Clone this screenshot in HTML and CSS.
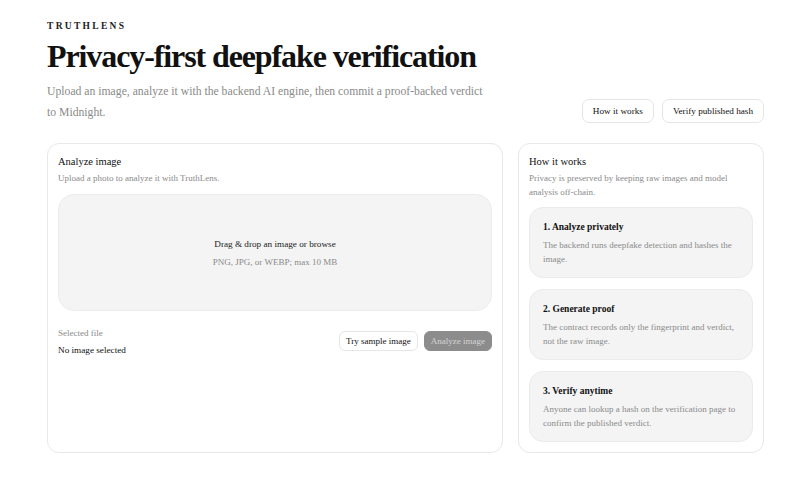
FILE: index.html
```html
<!DOCTYPE html>
<html lang="en">
<head>
<meta charset="utf-8">
<title>TruthLens</title>
<link rel="stylesheet" href="styles.css">
</head>
<body>
<div class="page">
  <header class="hero">
    <div class="hero-text">
      <div class="brand">TRUTHLENS</div>
      <h1 class="title">Privacy-first deepfake verification</h1>
      <p class="lead">Upload an image, analyze it with the backend AI engine, then commit a proof-backed verdict to Midnight.</p>
    </div>
    <div class="hero-actions">
      <button class="btn">How it works</button>
      <button class="btn">Verify published hash</button>
    </div>
  </header>

  <main class="grid">
    <section class="card">
      <h2 class="card-title">Analyze image</h2>
      <p class="card-sub">Upload a photo to analyze it with TruthLens.</p>
      <div class="dropzone">
        <div class="drop-main">Drag &amp; drop an image or browse</div>
        <div class="drop-hint">PNG, JPG, or WEBP; max 10 MB</div>
      </div>
      <div class="file-row">
        <div class="file-info">
          <div class="file-label">Selected file</div>
          <div class="file-name">No image selected</div>
        </div>
        <div class="file-actions">
          <button class="btn btn-sm">Try sample image</button>
          <button class="btn btn-sm btn-disabled">Analyze image</button>
        </div>
      </div>
    </section>

    <aside class="card">
      <h2 class="card-title">How it works</h2>
      <p class="card-sub">Privacy is preserved by keeping raw images and model analysis off-chain.</p>
      <div class="steps">
        <div class="step">
          <h3 class="step-title">1. Analyze privately</h3>
          <p class="step-text">The backend runs deepfake detection and hashes the image.</p>
        </div>
        <div class="step">
          <h3 class="step-title">2. Generate proof</h3>
          <p class="step-text">The contract records only the fingerprint and verdict, not the raw image.</p>
        </div>
        <div class="step">
          <h3 class="step-title">3. Verify anytime</h3>
          <p class="step-text">Anyone can lookup a hash on the verification page to confirm the published verdict.</p>
        </div>
      </div>
    </aside>
  </main>
</div>
</body>
</html>
```

FILE: styles.css
```css
* { box-sizing: border-box; }

html, body {
  margin: 0;
  padding: 0;
  background: #ffffff;
  color: #111111;
  font-family: "Liberation Serif", "Times New Roman", serif;
}

.page {
  padding: 20px 42px 20px 47px;
}

.hero {
  display: flex;
  justify-content: space-between;
  align-items: flex-end;
  gap: 20px;
}

.brand {
  font-size: 9.5px;
  font-weight: 700;
  letter-spacing: 2.3px;
  color: #222;
  line-height: 12px;
}

.title {
  margin: 4px 0 0 0;
  font-size: 32px;
  font-weight: 700;
  line-height: 40px;
  letter-spacing: -1.1px;
  color: #111;
}

.lead {
  margin: 5px 0 0 0;
  max-width: 445px;
  font-size: 11.7px;
  line-height: 21px;
  color: #8a8a8a;
}

.hero-actions {
  display: flex;
  gap: 8px;
  margin-bottom: 0;
}

.btn {
  font-family: "Liberation Serif", "Times New Roman", serif;
  font-size: 9.2px;
  color: #111;
  background: #fff;
  border: 1px solid #e6e6e6;
  border-radius: 7px;
  height: 24px;
  padding: 0 10px;
  cursor: pointer;
}

.grid {
  margin-top: 20px;
  display: grid;
  grid-template-columns: minmax(0, 1fr) 246px;
  gap: 15px;
  align-items: stretch;
}

.card {
  border: 1px solid #e8e8e8;
  border-radius: 12px;
  background: #fff;
  padding: 10px 10px 10px 10px;
}

.card-title {
  margin: 0;
  font-size: 10.5px;
  font-weight: 400;
  line-height: 15px;
  color: #111;
}

.card-sub {
  margin: 2px 0 0 0;
  font-size: 9px;
  line-height: 14px;
  color: #8a8a8a;
}

.dropzone {
  margin-top: 9px;
  height: 117px;
  background: #f4f4f4;
  border: 1px solid #ececec;
  border-radius: 16px;
  display: flex;
  flex-direction: column;
  align-items: center;
  justify-content: center;
  gap: 6px;
}

.drop-main {
  font-size: 9.2px;
  color: #222;
  line-height: 12px;
}

.drop-hint {
  font-size: 9px;
  color: #8a8a8a;
  line-height: 12px;
}

.file-row {
  margin-top: 15px;
  display: flex;
  justify-content: space-between;
  align-items: flex-start;
}

.file-label {
  font-size: 9px;
  color: #8a8a8a;
  line-height: 14px;
}

.file-name {
  margin-top: 4px;
  font-size: 9.2px;
  color: #111;
  line-height: 12px;
}

.file-actions {
  display: flex;
  gap: 6px;
  margin-top: 5px;
}

.btn-sm {
  height: 20px;
  padding: 0 6px;
  font-size: 9px;
  border-radius: 6px;
}

.btn-disabled {
  background: #8c8c8c;
  border-color: #8c8c8c;
  color: #d4d4d4;
  cursor: default;
}

.steps {
  margin-top: 8px;
  display: flex;
  flex-direction: column;
  gap: 11px;
}

.step {
  background: #f4f4f4;
  border: 1px solid #ebebeb;
  border-radius: 14px;
  padding: 13px 13px 10px 13px;
  height: 71px;
}

.step-title {
  margin: 0;
  font-size: 9.5px;
  font-weight: 700;
  line-height: 12px;
  color: #111;
}

.step-text {
  margin: 5px 0 0 0;
  font-size: 9px;
  line-height: 14px;
  color: #8a8a8a;
}
```
